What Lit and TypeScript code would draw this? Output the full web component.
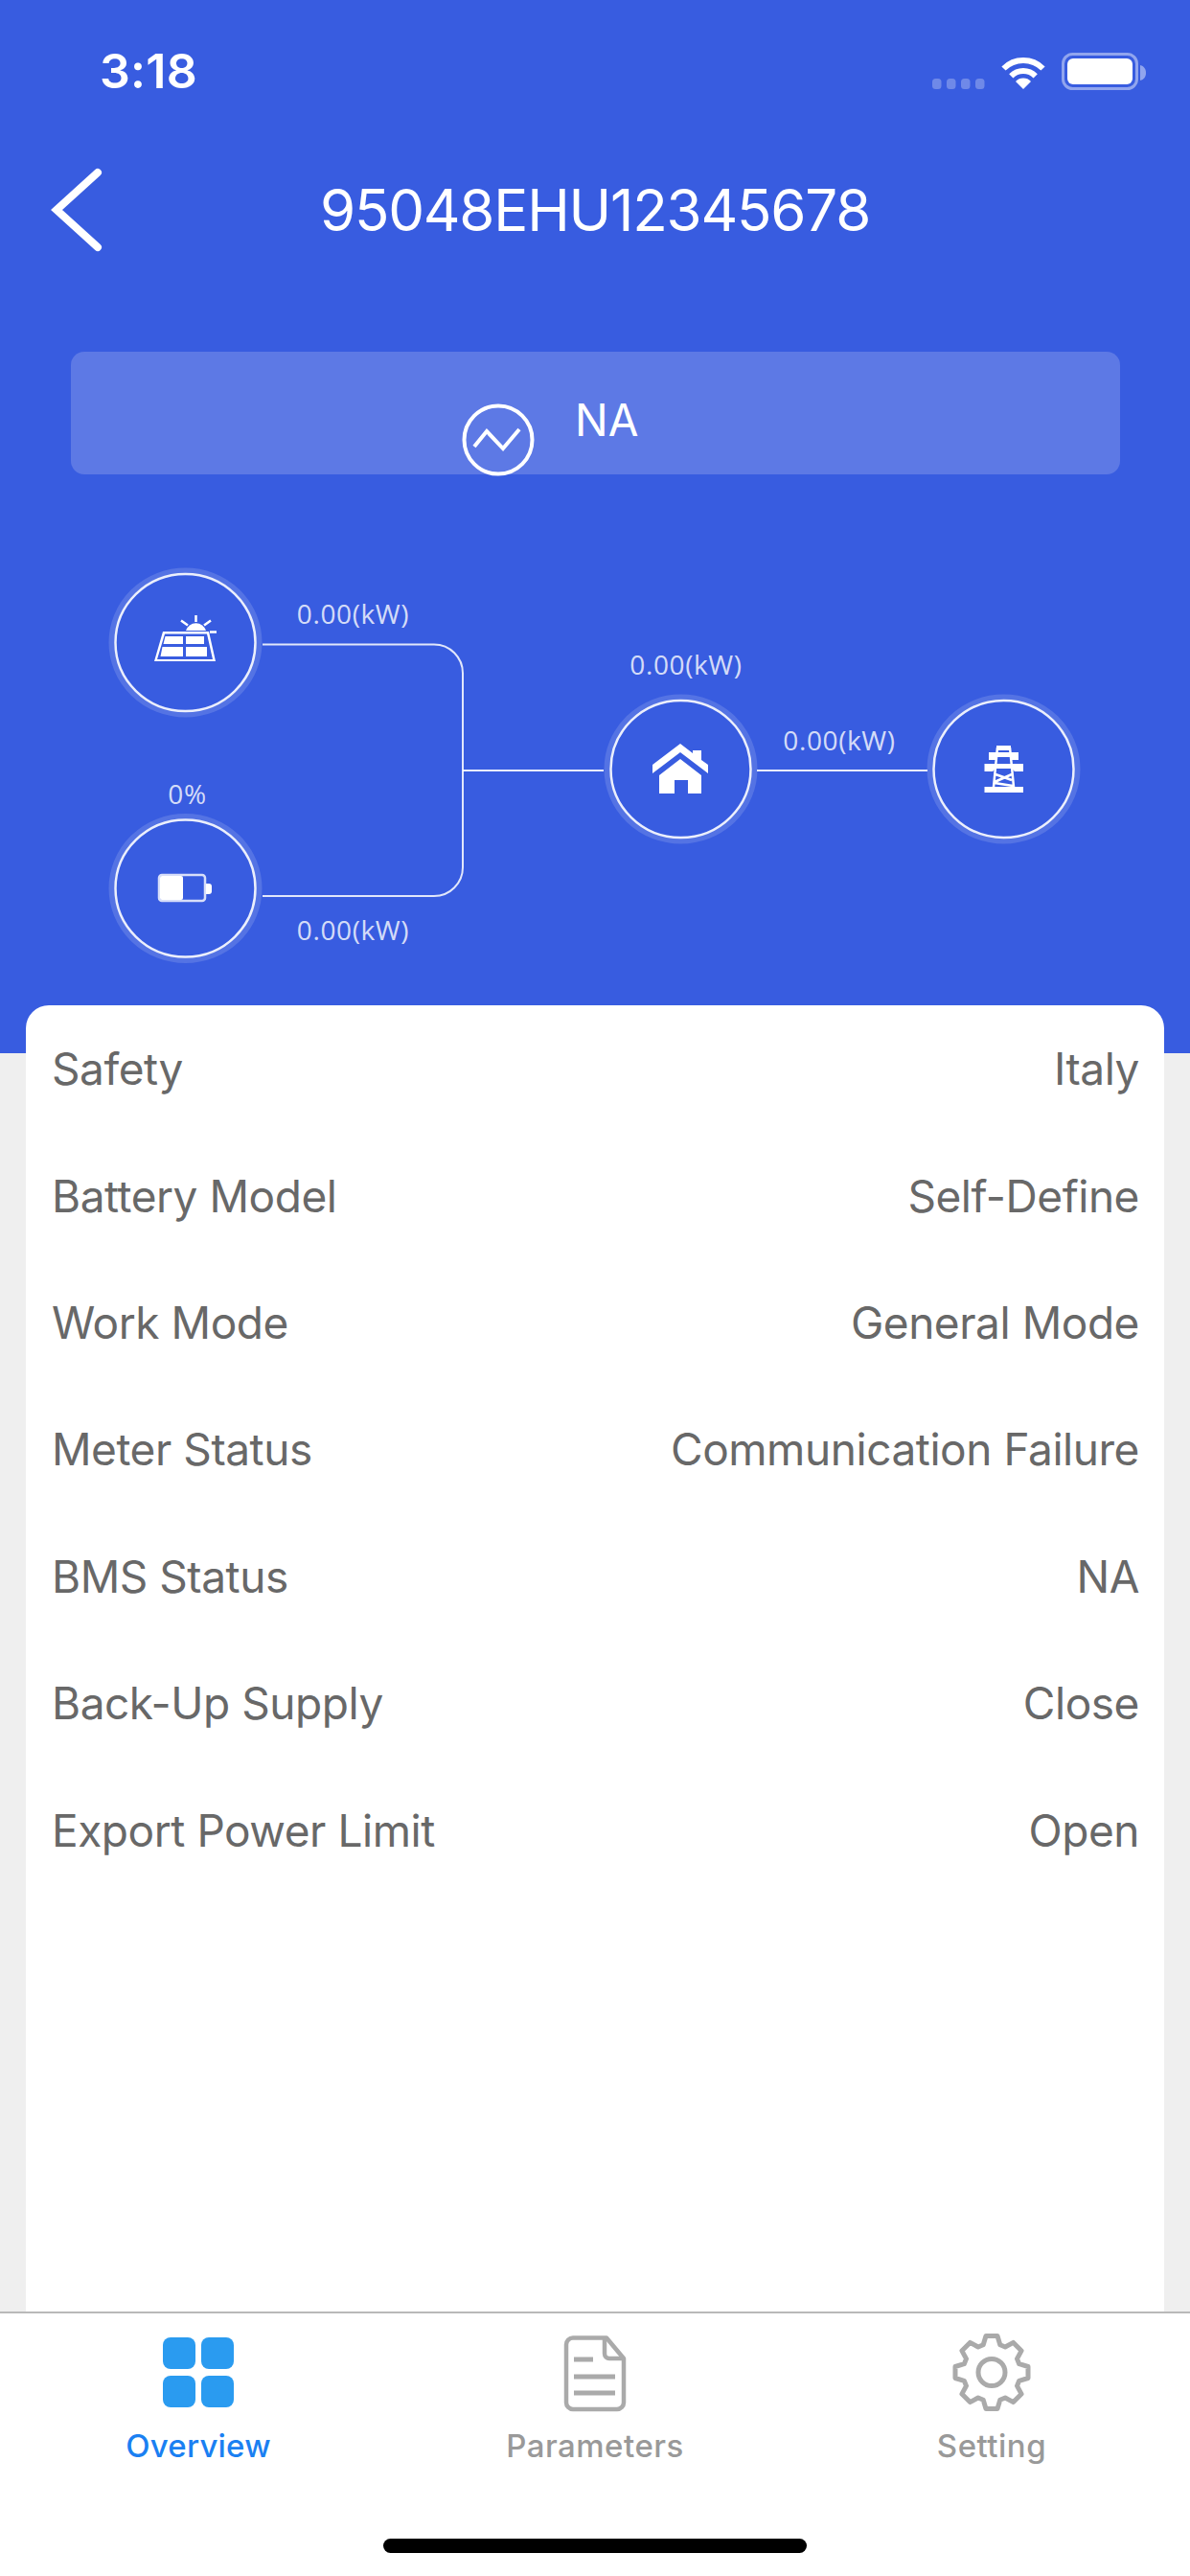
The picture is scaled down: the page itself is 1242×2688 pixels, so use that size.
import { LitElement, html, svg, css } from "lit";
import { customElement } from "lit/decorators.js";

const ROWS: [string, string][] = [
  ["Safety", "Italy"],
  ["Battery Model", "Self-Define"],
  ["Work Mode", "General Mode"],
  ["Meter Status", "Communication Failure"],
  ["BMS Status", "NA"],
  ["Back-Up Supply", "Close"],
  ["Export Power Limit", "Open"],
];

const DIAGRAM_TOP = 495;
const LABELS = [
  { text: "0.00(kW)", x: 368.5, y: 640 },
  { text: "0%", x: 195.5, y: 828 },
  { text: "0.00(kW)", x: 368.5, y: 970 },
  { text: "0.00(kW)", x: 716, y: 693 },
  { text: "0.00(kW)", x: 876, y: 772 },
];

const NODES = [
  { cx: 193.5, cy: 670.5 },
  { cx: 193.5, cy: 927 },
  { cx: 710.5, cy: 802.5 },
  { cx: 1047.5, cy: 802.5 },
];

function gearPath(cx: number, cy: number): string {
  const pts: string[] = [];
  const outer = 38.5;
  const root = 30;
  const rad = (d: number) => (d * Math.PI) / 180;
  for (let i = 0; i < 8; i++) {
    const a = i * 45 - 90;
    const list: [number, number][] = [
      [root, a - 17],
      [outer, a - 9],
      [outer, a + 9],
      [root, a + 17],
    ];
    for (const [r, d] of list) {
      pts.push(`${(cx + r * Math.cos(rad(d))).toFixed(1)} ${(cy + r * Math.sin(rad(d))).toFixed(1)}`);
    }
  }
  return "M" + pts.join("L") + "Z";
}

@customElement("app-root")
export class AppRoot extends LitElement {
  static styles = css`
    :host {
      display: block;
      width: 1242px;
      height: 2688px;
      background: #efefef;
      font-family: Inter, "Liberation Sans", sans-serif;
    }
    .page {
      display: flex;
      flex-direction: column;
      width: 1242px;
      height: 2688px;
    }
    .header {
      flex: none;
      height: 1099px;
      background: #385ce0;
      color: #fff;
      display: flex;
      flex-direction: column;
    }
    .status {
      flex: none;
      height: 174px;
      box-sizing: border-box;
      padding: 44px 44px 0 104px;
      display: flex;
      justify-content: space-between;
      align-items: flex-start;
    }
    .time {
      font-size: 50px;
      line-height: 60px;
      font-weight: 600;
      letter-spacing: 0.3px;
    }
    .status-icons {
      display: block;
      width: 226px;
      height: 50px;
      margin-top: 6px;
    }
    .nav {
      flex: none;
      height: 90px;
      display: grid;
      grid-template-columns: 1fr auto 1fr;
      align-items: center;
    }
    .back {
      display: block;
      width: 60px;
      height: 90px;
      margin-left: 50px;
    }
    .title {
      font-size: 60px;
      line-height: 90px;
      font-weight: 400;
      letter-spacing: -1.2px;
    }
    .banner {
      flex: none;
      height: 128px;
      margin: 103px 73px 0 74px;
      box-sizing: border-box;
      padding-left: 408px;
      border-radius: 14px;
      background: #5d79e5;
      display: flex;
      align-items: flex-start;
      gap: 42px;
    }
    .chart {
      display: block;
      width: 76px;
      height: 76px;
      margin-top: 54px;
      flex: none;
    }
    .na {
      font-size: 46px;
      line-height: 56px;
      margin-top: 43px;
    }
    .diagram {
      flex: 1;
      position: relative;
    }
    .diagram-art {
      position: absolute;
      inset: 0;
      width: 1242px;
      height: 604px;
    }
    .flow-label {
      position: absolute;
      transform: translate(-50%, -50%);
      font-size: 28px;
      line-height: 30px;
      white-space: nowrap;
      color: rgba(255, 255, 255, 0.8);
      font-family: "Open Sans", sans-serif;
      letter-spacing: 0.6px;
    }
    .card {
      flex: 1;
      margin: -50px 27px 0;
      background: #fff;
      border-radius: 24px 24px 0 0;
      position: relative;
      display: flex;
      flex-direction: column;
    }
    .row {
      flex: none;
      height: 132.4px;
      box-sizing: border-box;
      padding: 0 26px 0 27px;
      display: flex;
      justify-content: space-between;
      align-items: center;
      font-size: 46px;
      color: #686868;
      letter-spacing: -0.45px;
    }
    .tabs {
      flex: none;
      height: 276px;
      box-sizing: border-box;
      border-top: 2px solid #b9b9b9;
      background: #fff;
      position: relative;
      display: grid;
      grid-template-columns: repeat(3, 1fr);
      align-items: start;
    }
    .tab {
      display: flex;
      flex-direction: column;
      align-items: center;
      padding-top: 20px;
      color: #999;
      font-size: 33px;
      line-height: 40px;
      font-weight: 500;
      letter-spacing: 0.5px;
    }
    .tab.active {
      color: #1a80f2;
      letter-spacing: 0.2px;
    }
    .tab svg {
      display: block;
      width: 90px;
      height: 86px;
      margin-bottom: 12px;
    }
    .indicator {
      position: absolute;
      left: 400px;
      top: 235px;
      width: 442px;
      height: 15px;
      border-radius: 8px;
      background: #000;
    }
  `;

  render() {
    return html`
      <div class="page">
        <div class="header">
          <div class="status">
            <span class="time">3:18</span>
            <svg class="status-icons" viewBox="972 50 226 50">
              ${[973, 988, 1003, 1018].map(
                (x) => svg`<rect x=${x} y="82" width="9.5" height="11" rx="3.5" fill="#fff" fill-opacity=".28"></rect>`
              )}
              <path d="M1047.5 71.5a29 29 0 0 1 41 0M1055.3 79.3a18 18 0 0 1 25.4 0" fill="none" stroke="#fff" stroke-width="6"></path>
              <path d="M1068 93l-8-8a11 11 0 0 1 16 0z" fill="#fff"></path>
              <rect x="1109.5" y="56.5" width="77" height="36" rx="10" fill="none" stroke="#fff" stroke-opacity=".45" stroke-width="3"></rect>
              <rect x="1114" y="61" width="68" height="27" rx="6" fill="#fff"></rect>
              <path d="M1190 68c4 1 6 4 6 8s-2 7-6 8z" fill="#fff" fill-opacity=".45"></path>
            </svg>
          </div>
          <div class="nav">
            <svg class="back" viewBox="0 0 60 90">
              <path d="M52 6 L9 45 L52 84" fill="none" stroke="#fff" stroke-width="8" stroke-linecap="round" stroke-linejoin="miter"></path>
            </svg>
            <div class="title">95048EHU12345678</div>
            <div></div>
          </div>
          <div class="banner">
            <svg class="chart" viewBox="0 0 76 76">
              <circle cx="38" cy="38" r="35.5" fill="none" stroke="#fff" stroke-width="4"></circle>
              <path d="M13 45 L26 29 L43 47 L60 27" fill="none" stroke="#fff" stroke-width="4"></path>
            </svg>
            <span class="na">NA</span>
          </div>
          <div class="diagram">
            <svg class="diagram-art" viewBox="0 495 1242 604">
              <path d="M274 672.5H453a30 30 0 0 1 30 30V905a30 30 0 0 1-30 30H274" fill="none" stroke="#fff" stroke-opacity=".85" stroke-width="2"></path>
              <path d="M483 804H630M790 804H968" fill="none" stroke="#fff" stroke-opacity=".9" stroke-width="2"></path>
              ${NODES.map(
                (n) => svg`
                  <ellipse cx=${n.cx} cy=${n.cy} rx="77" ry="75" fill="none" stroke="#fff" stroke-opacity=".14" stroke-width="6"></ellipse>
                  <ellipse cx=${n.cx} cy=${n.cy} rx="73" ry="71.5" fill="#385ce0" stroke="#fff" stroke-opacity=".9" stroke-width="2.5"></ellipse>
                `
              )}
              <path d="M170 659H218L225 690H161ZM172 661.5L164 688H222L216 661.5Z" fill="#fff" fill-rule="evenodd"></path>
              <path d="M172.5 664H191V672H170.5ZM194 664H213V672H194ZM169.5 675H191V685H167.5ZM194 675H216V685H194Z" fill="#fff"></path>
              <path d="M194 658a11 11 0 0 1 21 0Z" fill="#fff"></path>
              <path d="M204.5 642V649M189 647.5L196 652.5M220 647.5L213 652.5M219 659.5H226" fill="none" stroke="#fff" stroke-width="2.5"></path>
              <rect x="166" y="913" width="48" height="27" rx="3" fill="none" stroke="#fff" stroke-opacity=".8" stroke-width="2.5"></rect>
              <rect x="167" y="914" width="24" height="25" rx="2" fill="#fff"></rect>
              <path d="M215 922h3a3 3 0 0 1 3 3v5a3 3 0 0 1-3 3h-3z" fill="#fff"></path>
              <path d="M681 798L710 776L723 786V783H732V793L739 798V807L710 785L681 807Z" fill="#fff"></path>
              <path d="M710 792L732 809V828H718V814H704V828H688V809Z" fill="#fff"></path>
              <path d="M1027.5 821H1068V827H1027.5ZM1040 778H1055V783H1040ZM1032 785H1063V793H1056V790H1039V793H1032ZM1027.5 797H1068V805H1059L1056 802H1039L1036 805H1027.5Z" fill="#fff"></path>
              <path d="M1041 780L1037 821M1054 780L1058 821M1039 808L1056 814M1056 808L1038 816M1038 817L1057 820" fill="none" stroke="#fff" stroke-width="2.5"></path>
            </svg>
            ${LABELS.map(
              (l) => html`<span class="flow-label" style="left:${l.x}px;top:${l.y - DIAGRAM_TOP}px">${l.text}</span>`
            )}
          </div>
        </div>
        <div class="card">
          ${ROWS.map(([k, v]) => html`<div class="row"><span>${k}</span><span>${v}</span></div>`)}
        </div>
        <div class="tabs">
          <div class="tab active">
            <svg viewBox="162 2434 90 86">
              <rect x="170" y="2439" width="34" height="33" rx="8" fill="#2a9bf0"></rect>
              <rect x="210" y="2439" width="34" height="33" rx="8" fill="#2a9bf0"></rect>
              <rect x="170" y="2479" width="34" height="33" rx="8" fill="#2a9bf0"></rect>
              <rect x="210" y="2479" width="34" height="33" rx="8" fill="#2a9bf0"></rect>
            </svg>
            <span>Overview</span>
          </div>
          <div class="tab">
            <svg viewBox="575 2434 90 86">
              <path d="M632 2439.5H597a7 7 0 0 0-7 7V2507a7 7 0 0 0 7 7H643a7 7 0 0 0 7-7V2461Z" fill="none" stroke="#aaa" stroke-width="4.5" stroke-linejoin="round"></path>
              <path d="M630 2441V2456a5 5 0 0 0 5 5H650" fill="none" stroke="#aaa" stroke-width="4.5"></path>
              <path d="M598 2462H618M598 2480H641M598 2497H641" fill="none" stroke="#aaa" stroke-width="5"></path>
            </svg>
            <span>Parameters</span>
          </div>
          <div class="tab">
            <svg viewBox="990 2434 90 86">
              <path d=${gearPath(1035, 2475.5)} fill="none" stroke="#aaa" stroke-width="5" stroke-linejoin="round"></path>
              <circle cx="1035" cy="2475.5" r="14" fill="none" stroke="#aaa" stroke-width="5"></circle>
            </svg>
            <span>Setting</span>
          </div>
          <div class="indicator"></div>
        </div>
      </div>
    `;
  }
}
